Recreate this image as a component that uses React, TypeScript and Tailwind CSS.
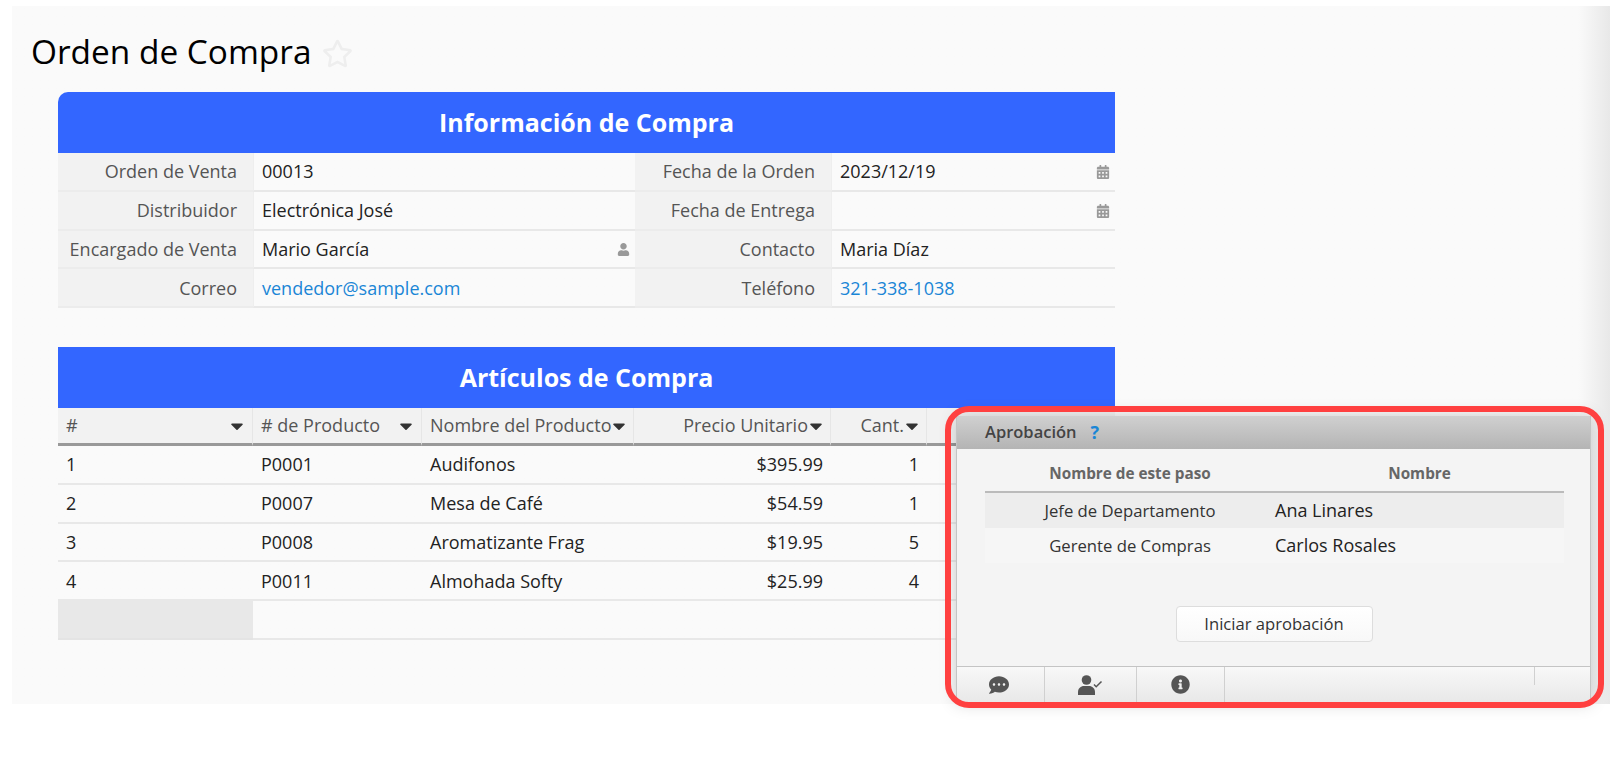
import React from "react";
import {
  FaCalendarAlt,
  FaCaretDown,
  FaCommentDots,
  FaInfoCircle,
  FaRegStar,
  FaUser,
} from "react-icons/fa";

const Label = ({ children }: { children: React.ReactNode }) => (
  <div className="h-[38.75px] pt-[1px] bg-[#f2f2f2] border-b-2 border-[#ececec] flex items-center justify-end pr-4 text-[#555]">
    {children}
  </div>
);

const Value = ({
  children,
  link,
  icon,
}: {
  children?: React.ReactNode;
  link?: boolean;
  icon?: React.ReactNode;
}) => (
  <div
    className={`h-[38.75px] pt-[1px] border-b-2 border-l border-[#e8e8e8] border-l-[#eeeeee] flex items-center justify-between pl-[8px] pr-[5px] ${
      link ? "text-[#1a86d6]" : "text-[#222]"
    }`}
  >
    <span>{children}</span>
    {icon}
  </div>
);

const cal = <FaCalendarAlt className="text-[#999] text-[14px]" />;

const Head = ({
  children,
  right,
  tight,
}: {
  children: React.ReactNode;
  right?: boolean;
  tight?: boolean;
}) => (
  <div
    className={`h-[38px] bg-[#f2f2f2] border-b-[3px] border-b-[#999] border-r border-r-[#e6e6e6] flex items-center text-[#555] pl-2 ${
      right ? "justify-end pr-[4px]" : tight ? "" : "justify-between pr-[5px]"
    }`}
  >
    <span className="whitespace-nowrap">{children}</span>
    <FaCaretDown
      className={`text-[#333] text-[20px] shrink-0 ${right || tight ? "-ml-[2px]" : ""}`}
    />
  </div>
);

const items = [
  ["1", "P0001", "Audifonos", "$395.99", "1"],
  ["2", "P0007", "Mesa de Café", "$54.59", "1"],
  ["3", "P0008", "Aromatizante Frag", "$19.95", "5"],
  ["4", "P0011", "Almohada Softy", "$25.99", "4"],
];

const UserCheck = () => (
  <svg width="25" height="20" viewBox="0 0 25 20" fill="#555">
    <circle cx="8.5" cy="5" r="4.8" />
    <path d="M0 20v-3c0-3.6 2.8-6 6-6h5c3.2 0 6 2.400 6 6v3z" />
    <path d="M16 9.500l2.200 2.200L23.500 6.500" fill="none" stroke="#555" strokeWidth="1.500" />
  </svg>
);

export default function App() {
  return (
    <div className="relative w-[1618px] h-[758px] bg-white overflow-hidden pt-[6px] pl-[12px] font-['Open_Sans',sans-serif] text-[18px]">
      <div className="w-[1598px] h-[698px] bg-gradient-to-r from-[#fafafa] from-[98%] to-[#e8e8e8]">
        <div className="flex items-center h-[86px] pl-[19px] pt-[6px] gap-[12px]">
          <h1 className="text-[33.4px] text-black leading-none">Orden de Compra</h1>
          <FaRegStar className="text-[#eeeeee] text-[31px] mt-[2px] -ml-[1px]" />
        </div>

        <div className="ml-[46px] w-[1057px]">
          <div className="h-[61px] bg-[#3366ff] rounded-tl-[10px] flex items-center justify-center text-white font-bold text-[25px]">
            Información de Compra
          </div>
          <div className="grid grid-cols-[195px_382px_196px_284px]">
            <Label>Orden de Venta</Label>
            <Value>00013</Value>
            <Label>Fecha de la Orden</Label>
            <Value icon={cal}>2023/12/19</Value>
            <Label>Distribuidor</Label>
            <Value>Electrónica José</Value>
            <Label>Fecha de Entrega</Label>
            <Value icon={cal} />
            <Label>Encargado de Venta</Label>
            <Value icon={<FaUser className="text-[#999] text-[13px]" />}>Mario García</Value>
            <Label>Contacto</Label>
            <Value>Maria Díaz</Value>
            <Label>Correo</Label>
            <Value link>vendedor@sample.com</Value>
            <Label>Teléfono</Label>
            <Value link>321-338-1038</Value>
          </div>

          <div className="h-[61px] mt-[39px] bg-[#3366ff] flex items-center justify-center text-white font-bold text-[25px]">
            Artículos de Compra
          </div>
          <div className="grid grid-cols-[195px_169px_212px_197px_96px_188px]">
            <Head>#</Head>
            <Head># de Producto</Head>
            <Head tight>Nombre del Producto</Head>
            <Head right>Precio Unitario</Head>
            <Head right>Cant.</Head>
            <div className="h-[38px] bg-[#f2f2f2] border-b-[3px] border-b-[#999]" />
            {items.map((row) => (
              <React.Fragment key={row[0]}>
                <div className="h-[38.75px] pt-[1px] border-b-2 border-[#e8e8e8] flex items-center pl-2 text-[#222]">{row[0]}</div>
                <div className="h-[38.75px] pt-[1px] border-b-2 border-[#e8e8e8] flex items-center pl-2 text-[#222]">{row[1]}</div>
                <div className="h-[38.75px] pt-[1px] border-b-2 border-[#e8e8e8] flex items-center pl-2 text-[#222]">{row[2]}</div>
                <div className="h-[38.75px] pt-[1px] border-b-2 border-[#e8e8e8] flex items-center justify-end pr-2 text-[#222]">{row[3]}</div>
                <div className="h-[38.75px] pt-[1px] border-b-2 border-[#e8e8e8] flex items-center justify-end pr-2 text-[#222]">{row[4]}</div>
                <div className="h-[38.75px] border-b-2 border-[#e8e8e8]" />
              </React.Fragment>
            ))}
            <div className="h-[38.75px] bg-[#e8e8e8] border-b-2 border-[#e4e4e4]" />
            <div className="col-span-5 h-[38.75px] border-b-2 border-[#e8e8e8]" />
          </div>
        </div>
      </div>

      {/* Approval panel */}
      <div className="absolute left-[956px] top-[416px] w-[635px] h-[287px] bg-[#f4f4f4] border-x border-[#c4c4c4] flex flex-col shadow-[0_0_16px_rgba(0,0,0,0.2)]">
        <div className="h-[33px] shrink-0 bg-gradient-to-b from-[#d0d0d0] to-[#b4b4b4] flex items-center pl-[28px] gap-[14px] text-[16.5px] font-semibold text-[#444]">
          <span>Aprobación</span>
          <span className="text-[#1a86d6] text-[18px] font-bold">?</span>
        </div>
        <div className="flex-1 pl-[28px] pr-[27px] pt-[10px]">
          <div className="grid grid-cols-[290px_289px] text-[16.7px]">
            <div className="h-[34px] pb-[4px] border-b-2 border-[#bbb] flex items-center justify-center text-[15.3px] font-bold text-[#666]">
              Nombre de este paso
            </div>
            <div className="h-[34px] pb-[4px] border-b-2 border-[#bbb] flex items-center justify-center text-[15.3px] font-bold text-[#666]">
              Nombre
            </div>
            <div className="h-[35px] bg-[#ededed] flex items-center justify-center text-[#333]">Jefe de Departamento</div>
            <div className="h-[35px] bg-[#ededed] flex items-center text-[18px] text-[#222]">Ana Linares</div>
            <div className="h-[35px] bg-[#f6f6f6] flex items-center justify-center text-[#333]">Gerente de Compras</div>
            <div className="h-[35px] bg-[#f6f6f6] flex items-center text-[18px] text-[#222]">Carlos Rosales</div>
          </div>
          <div className="flex justify-center mt-[43px]">
            <button className="w-[197px] h-[36px] bg-gradient-to-b from-white to-[#f8f8f8] border border-[#dddddd] rounded-[4px] text-[16.6px] text-[#333]">
              Iniciar aprobación
            </button>
          </div>
        </div>
        <div className="h-[37px] shrink-0 border-t border-[#c4c4c4] bg-gradient-to-b from-[#f8f8f8] to-[#e8e8e8] flex">
          <div className="w-[88px] h-[35px] pr-[3px] border-r border-[#d0d0d0] flex items-center justify-center">
            <FaCommentDots className="text-[#555] text-[20px]" />
          </div>
          <div className="w-[92px] h-[35px] border-r border-[#d0d0d0] flex items-center justify-center">
            <UserCheck />
          </div>
          <div className="w-[88px] h-[35px] border-r border-[#d0d0d0] flex items-center justify-center">
            <FaInfoCircle className="text-[#555] text-[19px]" />
          </div>
          <div className="w-[310px] h-[18px] border-r border-[#d0d0d0]" />
        </div>
      </div>

      {/* Highlight frame */}
      <div className="absolute left-[945px] top-[406px] w-[659px] h-[302px] border-[6px] border-[#ff4040] rounded-[24px] pointer-events-none" />
    </div>
  );
}
